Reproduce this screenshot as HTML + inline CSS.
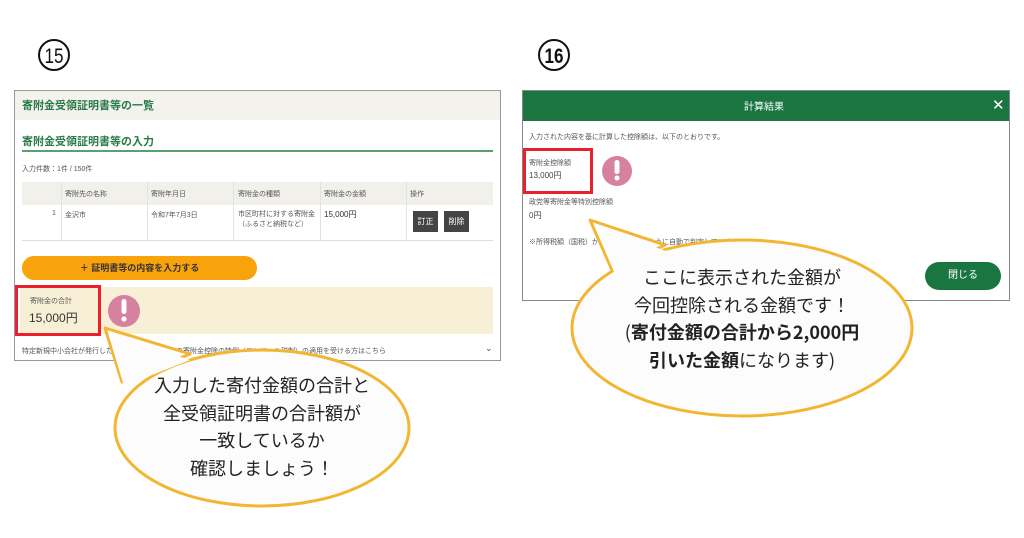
<!DOCTYPE html>
<html><head><meta charset="utf-8"><style>
*{margin:0;padding:0;box-sizing:border-box}
body{width:1024px;height:538px;background:#fff;position:relative;overflow:hidden;font-family:"Liberation Sans","Noto Sans CJK JP",sans-serif;color:#333}
.a{position:absolute;white-space:nowrap}
.s{font-size:7px;color:#555}
</style></head><body>
<svg class="a" style="left:0;top:0" width="1024" height="538">
<circle cx="54" cy="55" r="15" fill="none" stroke="#111" stroke-width="2"/>
<text x="54" y="63" font-size="21" text-anchor="middle" font-family="Liberation Sans" fill="#111" textLength="19" lengthAdjust="spacingAndGlyphs">15</text>
<circle cx="554" cy="55" r="15" fill="none" stroke="#111" stroke-width="2"/>
<text x="554" y="63" font-size="21" text-anchor="middle" font-family="Liberation Sans" font-weight="bold" fill="#111" textLength="19" lengthAdjust="spacingAndGlyphs">16</text>
</svg>

<!-- Left panel -->
<div class="a" style="left:14px;top:90px;width:487px;height:271px;border:1px solid #999;background:#fff"></div>
<div class="a" style="left:15px;top:91px;width:485px;height:29px;background:#f4f2ec"></div>
<div class="a" style="left:22px;top:97px;font-size:11px;font-weight:bold;color:#2a7a4a">寄附金受領証明書等の一覧</div>
<div class="a" style="left:22px;top:133px;font-size:11px;font-weight:bold;color:#2a7a4a">寄附金受領証明書等の入力</div>
<div class="a" style="left:22px;top:150px;width:471px;height:2px;background:#5a9e73"></div>
<div class="a s" style="left:22px;top:164px">入力件数：1件 / 150件</div>
<div class="a" style="left:22px;top:182px;width:471px;height:23px;background:#f2f0ea"></div>
<div class="a" style="left:22px;top:240px;width:471px;height:1px;background:#ddd"></div>
<div class="a" style="left:61px;top:182px;width:1px;height:58px;background:#e2e2e2"></div>
<div class="a" style="left:147px;top:182px;width:1px;height:58px;background:#e2e2e2"></div>
<div class="a" style="left:233px;top:182px;width:1px;height:58px;background:#e2e2e2"></div>
<div class="a" style="left:320px;top:182px;width:1px;height:58px;background:#e2e2e2"></div>
<div class="a" style="left:406px;top:182px;width:1px;height:58px;background:#e2e2e2"></div>
<div class="a s" style="left:65px;top:189px">寄附先の名称</div>
<div class="a s" style="left:151px;top:189px">寄附年月日</div>
<div class="a s" style="left:238px;top:189px">寄附金の種類</div>
<div class="a s" style="left:324px;top:189px">寄附金の金額</div>
<div class="a s" style="left:410px;top:189px">操作</div>
<div class="a s" style="left:52px;top:210px">1</div>
<div class="a s" style="left:65px;top:210px">金沢市</div>
<div class="a s" style="left:151px;top:210px">令和7年7月3日</div>
<div class="a s" style="left:238px;top:210px;line-height:10px">市区町村に対する寄附金<br>（ふるさと納税など）</div>
<div class="a" style="left:324px;top:209px;font-size:8px">15,000円</div>
<div class="a" style="left:413px;top:211px;width:25px;height:21px;background:#444;color:#fff;font-size:8px;text-align:center;line-height:21px">訂正</div>
<div class="a" style="left:444px;top:211px;width:25px;height:21px;background:#444;color:#fff;font-size:8px;text-align:center;line-height:21px">削除</div>
<div class="a" style="left:22px;top:256px;width:235px;height:24px;border-radius:12px;background:#f8a20c;color:#333;font-size:9px;font-weight:bold;text-align:center;line-height:24px">＋ 証明書等の内容を入力する</div>
<div class="a" style="left:20px;top:287px;width:473px;height:47px;background:#f8f0d6"></div>
<div class="a" style="left:15px;top:285px;width:86px;height:51px;border:3px solid #e8222c"></div>
<div class="a" style="left:30px;top:296px;font-size:7px;color:#555">寄附金の合計</div>
<div class="a" style="left:29px;top:309px;font-size:12px;color:#333">15,000円</div>
<div class="a s" style="left:22px;top:346px">特定新規中小会社が発行した株式を取得した場合の寄附金控除の特例（エンジェル税制）の適用を受ける方はこちら</div>
<div class="a" style="left:485px;top:343px;font-size:9px;color:#555">⌄</div>

<!-- Right panel -->
<div class="a" style="left:522px;top:90px;width:488px;height:211px;border:1px solid #888;background:#fff"></div>
<div class="a" style="left:523px;top:91px;width:486px;height:30px;background:#1b7541"></div>
<div class="a" style="left:744px;top:98px;font-size:10px;color:#fff">計算結果</div>
<div class="a" style="left:992px;top:96px;font-size:15px;color:#fff">✕</div>
<div class="a s" style="left:529px;top:132px">入力された内容を基に計算した控除額は、以下のとおりです。</div>
<div class="a" style="left:523px;top:148px;width:70px;height:46px;border:3px solid #e8222c"></div>
<div class="a s" style="left:529px;top:158px">寄附金控除額</div>
<div class="a" style="left:529px;top:170px;font-size:8px;color:#444">13,000円</div>
<div class="a s" style="left:529px;top:197px">政党等寄附金等特別控除額</div>
<div class="a" style="left:529px;top:210px;font-size:8px;color:#444">0円</div>
<div class="a s" style="left:529px;top:237px">※所得税額（国税）が最も少なくなるように自動で判定しています。</div>
<div class="a" style="left:925px;top:262px;width:76px;height:28px;border-radius:14px;background:#1b7541;color:#fff;font-size:10px;text-align:center;line-height:28px">閉じる</div>

<svg class="a" style="left:0;top:0" width="1024" height="538">
<circle cx="124" cy="311" r="16" fill="#d6819f"/>
<rect x="121.5" y="299" width="5" height="15" rx="2.5" fill="#fff"/>
<circle cx="124" cy="319" r="2.6" fill="#fff"/>
<circle cx="617" cy="171" r="15" fill="#d6819f"/>
<rect x="614.5" y="160" width="5" height="14" rx="2.5" fill="#fff"/>
<circle cx="617" cy="178" r="2.5" fill="#fff"/>
<!-- left bubble -->
<polygon points="105,328 122,382 190,354" fill="#fcfcfc" stroke="#f2b632" stroke-width="3" stroke-linejoin="round"/>
<ellipse cx="262" cy="428" rx="147" ry="78" fill="#fcfcfc" stroke="#f2b632" stroke-width="3"/>
<polygon points="108,333 124,386 190,360" fill="#fcfcfc"/>
<!-- right bubble -->
<polygon points="590,220 612,270 665,245" fill="#fcfcfc" stroke="#f2b632" stroke-width="3" stroke-linejoin="round"/>
<ellipse cx="742" cy="328" rx="170" ry="88" fill="#fcfcfc" stroke="#f2b632" stroke-width="3"/>
<polygon points="594,225 615,274 666,251" fill="#fcfcfc"/>
</svg>
<div class="a" style="left:117px;top:372px;width:290px;text-align:center;font-size:18px;line-height:27.5px;color:#222;font-family:'Noto Sans CJK JP',sans-serif">入力した寄付金額の合計と<br>全受領証明書の合計額が<br>一致しているか<br>確認しましょう！</div>
<div class="a" style="left:572px;top:264px;width:340px;text-align:center;font-size:18px;line-height:27.5px;color:#222;font-family:'Noto Sans CJK JP',sans-serif">ここに表示された金額が<br>今回控除される金額です！<br>(<b>寄付金額の合計から2,000円</b><br><b>引いた金額</b>になります)</div>
</body></html>
